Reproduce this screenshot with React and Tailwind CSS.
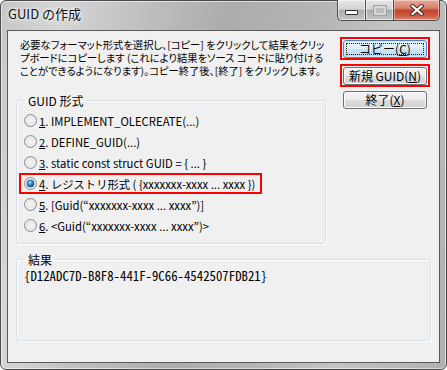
import React from "react";

const JP = "font-['Noto_Sans_CJK_JP','Noto_Sans',sans-serif]";

function Radio({ checked }) {
  return (
    <svg width="13" height="13" viewBox="0 0 13 13" className="shrink-0">
      <defs>
        <radialGradient id="rgOff" cx="0.5" cy="0.5" r="0.6">
          <stop offset="0" stopColor="#f6f6f6" />
          <stop offset="0.6" stopColor="#e6e6e6" />
          <stop offset="1" stopColor="#c9c9c9" />
        </radialGradient>
        <radialGradient id="rgOn" cx="0.4" cy="0.35" r="0.75">
          <stop offset="0" stopColor="#9ee0fb" />
          <stop offset="0.45" stopColor="#2a8fd6" />
          <stop offset="1" stopColor="#0b3a74" />
        </radialGradient>
      </defs>
      <circle cx="6.5" cy="6.5" r="6" fill="url(#rgOff)" stroke="#8c8f92" strokeWidth="1" />
      <circle cx="6.5" cy="6.5" r="4.6" fill="none" stroke="#ffffff" strokeOpacity="0.6" strokeWidth="0.8" />
      {checked && (
        <circle cx="6.5" cy="6.5" r="3.6" fill="url(#rgOn)" stroke="#17426e" strokeWidth="0.6" />
      )}
    </svg>
  );
}

function RadioRow({ n, label, checked, boxed }) {
  return (
    <div
      className={
        "flex items-center h-[21px] " +
        (boxed ? "border-2 border-[#ff0000] -ml-[5px] pl-[3px] w-[243px]" : "")
      }
    >
      <Radio checked={checked} />
      <span className="ml-[2px] whitespace-nowrap text-[11.3px] leading-[14px] text-black">
        <span className="underline underline-offset-[1px]">{n}</span>. {label}
      </span>
    </div>
  );
}

function Btn({ children, primary }) {
  return (
    <div
      className={
        "relative h-[18px] w-[84px] rounded-[3px] border flex items-center justify-center text-[12px] leading-[14px] text-black " +
        (primary
          ? "border-[#3c8fce] bg-[linear-gradient(#eef7fd_0%,#dfeefa_48%,#c9e3f5_52%,#bcd9ee_100%)] shadow-[inset_0_0_0_1px_#cbeaff]"
          : "border-[#707070] bg-[linear-gradient(#f4f4f4_0%,#ebebeb_48%,#dedede_52%,#d0d0d0_100%)] shadow-[inset_0_0_0_1px_#fcfcfc]")
      }
    >
      {primary && (
        <div className="absolute inset-[2px] border border-dotted border-[#202020]" />
      )}
      <span className="whitespace-nowrap">{children}</span>
    </div>
  );
}

export default function App() {
  return (
    <div className={"w-[447px] h-[370px] bg-white " + JP}>
      <div className="w-[447px] h-[370px] flex flex-col border border-[#4b4b4b] rounded-[6px] px-[6px] pb-[6px] bg-[linear-gradient(100deg,#c6c6c6_0%,#d6d6d6_12%,#c2c2c2_26%,#acacac_45%,#b4b4b4_62%,#c4c4c4_78%,#b0b0b0_100%)] shadow-[inset_0_0_0_1px_rgba(255,255,255,0.55)]">
        {/* title bar */}
        <div className="h-[29px] flex items-start shrink-0">
          <div className="pl-[1px] pt-[5px] text-[13px] leading-[16px] text-[#111] whitespace-nowrap [text-shadow:0_0_6px_#ffffff,0_0_3px_#ffffff]">
            GUID の作成
          </div>
          <div className="ml-auto -mt-[1px] flex h-[21px]">
            <div className="w-[28px] h-full border border-[#4e4e4e] border-t-0 border-r-0 rounded-bl-[5px] bg-[linear-gradient(#e6e6e6_0%,#d4d4d4_45%,#aeaeae_52%,#c4c4c4_100%)] shadow-[inset_0_0_0_1px_rgba(255,255,255,0.55)] flex items-end justify-center pb-[5px]">
              <div className="w-[13px] h-[5px] bg-white border border-[#2f2f2f] rounded-[1px]" />
            </div>
            <div className="w-[28px] h-full border border-[#4e4e4e] border-t-0 border-r-0 bg-[linear-gradient(#e6e6e6_0%,#d4d4d4_45%,#aeaeae_52%,#c4c4c4_100%)] shadow-[inset_0_0_0_1px_rgba(255,255,255,0.55)] flex items-center justify-center">
              <div className="w-[12px] h-[9px] border-2 border-[#d8d8d8] bg-[#bdbdbd] outline outline-1 outline-[#a0a0a0]" />
            </div>
            <div className="w-[47px] h-full border border-[#4e4e4e] border-t-0 rounded-br-[5px] bg-[linear-gradient(#e9a897_0%,#d7826d_40%,#c2452f_52%,#cc5b43_80%,#dc8c74_100%)] shadow-[inset_0_0_0_1px_rgba(255,255,255,0.4)] flex items-center justify-center">
              <svg width="14" height="12" viewBox="0 0 14 12">
                <path d="M2.5 2 L11.5 10 M11.5 2 L2.5 10" stroke="#3a2a28" strokeWidth="4" strokeLinecap="square" />
                <path d="M2.5 2 L11.5 10 M11.5 2 L2.5 10" stroke="#ffffff" strokeWidth="2.2" strokeLinecap="square" />
              </svg>
            </div>
          </div>
        </div>

        {/* client area */}
        <div className="flex-1 border border-[#5a5a5a] bg-[#f0f0f0] px-[8px] flex flex-col">
          <div className="flex items-start">
            <div className="w-[310px] flex flex-col">
              <div className="pl-[4px] mt-[7px] text-[10.3px] leading-[13px] text-black whitespace-nowrap [font-feature-settings:'palt']">
                <div>必要なフォーマット形式を選択し、[コピー] をクリックして結果をクリッ</div>
                <div>プボードにコピーします (これにより結果をソース コードに貼り付ける</div>
                <div>ことができるようになります)。コピー終了後、[終了] をクリックします。</div>
              </div>
              <fieldset className="mt-[16px] h-[151px] border border-[#d5dfe5] rounded-[3px] pl-[7px] pt-[2px] shadow-[inset_1px_1px_0_#ffffff,1px_1px_0_#ffffff]">
                <legend className="ml-[1px] px-[3px] text-[12px] leading-[15px] text-black">GUID 形式</legend>
                <RadioRow n="1" label="IMPLEMENT_OLECREATE(...)" />
                <RadioRow n="2" label="DEFINE_GUID(...)" />
                <RadioRow n="3" label="static const struct GUID = { ... }" />
                <RadioRow n="4" label="レジストリ形式 ( {xxxxxxx-xxxx ... xxxx })" checked boxed />
                <RadioRow n="5" label={"[Guid(\u201Cxxxxxxx-xxxx ... xxxx\u201D)]"} />
                <RadioRow n="6" label={"<Guid(\u201Cxxxxxxx-xxxx ... xxxx\u201D)>"} />
              </fieldset>
            </div>
            <div className="ml-[14px] mt-[6px] flex flex-col gap-[4px] w-[90px]">
              <div className="border-2 border-[#ff0000] px-[1px] pt-[1px] w-[90px] h-[23px]">
                <Btn primary>
                  コピー(<span className="underline">C</span>)
                </Btn>
              </div>
              <div className="border-2 border-[#ff0000] px-[1px] pt-[1px] w-[90px] h-[23px]">
                <Btn>
                  新規 GUID(<span className="underline">N</span>)
                </Btn>
              </div>
              <div className="px-[3px]">
                <Btn>
                  終了(<span className="underline">X</span>)
                </Btn>
              </div>
            </div>
          </div>

          <fieldset className="mt-[8px] w-[415px] h-[89px] border border-[#d5dfe5] rounded-[3px] pl-[7px] shadow-[inset_1px_1px_0_#ffffff,1px_1px_0_#ffffff]">
            <legend className="ml-[1px] px-[3px] text-[12px] leading-[15px] text-black">結果</legend>
            <div className="mt-[2px] text-[12.8px] leading-[14px] text-black whitespace-nowrap font-['Noto_Sans_Mono_CJK_JP','Liberation_Mono',monospace]">
              {"{D12ADC7D-B8F8-441F-9C66-4542507FDB21}"}
            </div>
          </fieldset>
        </div>
      </div>
    </div>
  );
}
